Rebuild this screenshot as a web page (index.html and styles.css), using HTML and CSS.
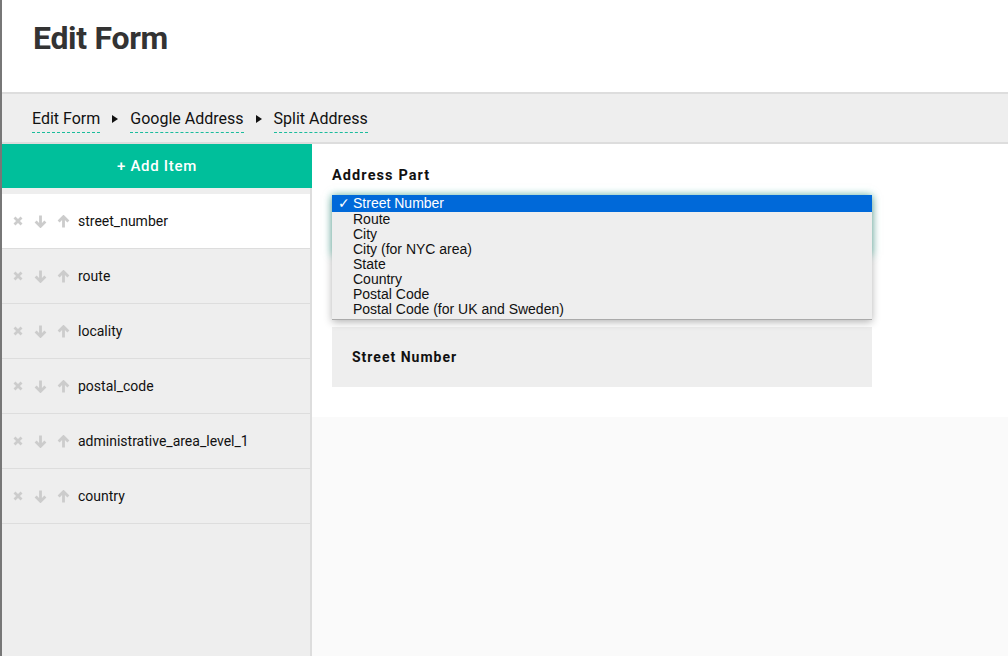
FILE: index.html
```html
<!DOCTYPE html>
<html>
<head>
<meta charset="utf-8">
<link rel="stylesheet" href="styles.css">
</head>
<body>
<div class="app">
  <header class="header">
    <h1 class="title">Edit Form</h1>
  </header>
  <nav class="crumbs">
    <span class="crumb">Edit Form</span>
    <span class="tri"></span>
    <span class="crumb">Google Address</span>
    <span class="tri"></span>
    <span class="crumb">Split Address</span>
  </nav>
  <div class="body">
    <aside class="sidebar">
      <div class="add">+ Add Item</div>
      <ul class="items">
        <li class="item active">
          <svg class="ic x" viewBox="0 0 12 12"><path d="M2.5 2.5L9.5 9.5M9.5 2.5L2.5 9.5"/></svg>
          <svg class="ic" viewBox="0 0 12 12"><path d="M6 0.5V10.5M1.5 6L6 10.5L10.5 6"/></svg>
          <svg class="ic" viewBox="0 0 12 12"><path d="M6 11.5V1.5M1.5 6L6 1.5L10.5 6"/></svg>
          <span class="name">street_number</span></li>
        <li class="item">
          <svg class="ic x" viewBox="0 0 12 12"><path d="M2.5 2.5L9.5 9.5M9.5 2.5L2.5 9.5"/></svg>
          <svg class="ic" viewBox="0 0 12 12"><path d="M6 0.5V10.5M1.5 6L6 10.5L10.5 6"/></svg>
          <svg class="ic" viewBox="0 0 12 12"><path d="M6 11.5V1.5M1.5 6L6 1.5L10.5 6"/></svg>
          <span class="name">route</span></li>
        <li class="item">
          <svg class="ic x" viewBox="0 0 12 12"><path d="M2.5 2.5L9.5 9.5M9.5 2.5L2.5 9.5"/></svg>
          <svg class="ic" viewBox="0 0 12 12"><path d="M6 0.5V10.5M1.5 6L6 10.5L10.5 6"/></svg>
          <svg class="ic" viewBox="0 0 12 12"><path d="M6 11.5V1.5M1.5 6L6 1.5L10.5 6"/></svg>
          <span class="name">locality</span></li>
        <li class="item">
          <svg class="ic x" viewBox="0 0 12 12"><path d="M2.5 2.5L9.5 9.5M9.5 2.5L2.5 9.5"/></svg>
          <svg class="ic" viewBox="0 0 12 12"><path d="M6 0.5V10.5M1.5 6L6 10.5L10.5 6"/></svg>
          <svg class="ic" viewBox="0 0 12 12"><path d="M6 11.5V1.5M1.5 6L6 1.5L10.5 6"/></svg>
          <span class="name">postal_code</span></li>
        <li class="item">
          <svg class="ic x" viewBox="0 0 12 12"><path d="M2.5 2.5L9.5 9.5M9.5 2.5L2.5 9.5"/></svg>
          <svg class="ic" viewBox="0 0 12 12"><path d="M6 0.5V10.5M1.5 6L6 10.5L10.5 6"/></svg>
          <svg class="ic" viewBox="0 0 12 12"><path d="M6 11.5V1.5M1.5 6L6 1.5L10.5 6"/></svg>
          <span class="name">administrative_area_level_1</span></li>
        <li class="item">
          <svg class="ic x" viewBox="0 0 12 12"><path d="M2.5 2.5L9.5 9.5M9.5 2.5L2.5 9.5"/></svg>
          <svg class="ic" viewBox="0 0 12 12"><path d="M6 0.5V10.5M1.5 6L6 10.5L10.5 6"/></svg>
          <svg class="ic" viewBox="0 0 12 12"><path d="M6 11.5V1.5M1.5 6L6 1.5L10.5 6"/></svg>
          <span class="name">country</span></li>
      </ul>
    </aside>
    <main class="main">
      <section class="panel">
        <div class="label">Address Part</div>
        <div class="select-wrap">
          <div class="select"></div>
          <ul class="menu">
            <li class="opt sel"><span class="check">&#x2713;</span>Street Number</li>
            <li class="opt">Route</li>
            <li class="opt">City</li>
            <li class="opt">City (for NYC area)</li>
            <li class="opt">State</li>
            <li class="opt">Country</li>
            <li class="opt">Postal Code</li>
            <li class="opt">Postal Code (for UK and Sweden)</li>
          </ul>
        </div>
        <div class="preview">Street Number</div>
      </section>
    </main>
  </div>
</div>
</body>
</html>
```

FILE: styles.css
```css
* { box-sizing: border-box; }
html, body { margin: 0; padding: 0; height: 100%; }
body { font-family: Roboto, "Noto Sans", sans-serif; color: #222; background: #fafafa; }
.app { height: 656px; display: flex; flex-direction: column; border-left: 2px solid #777; overflow: hidden; }
.header { height: 94px; background: #fff; border-bottom: 2px solid #ddd; padding: 19px 0 0 31px; flex: none; }
.title { margin: 0; font-size: 32px; font-weight: 700; color: #333; letter-spacing: -0.3px; line-height: 38px; }
.crumbs { height: 50px; background: #eee; border-bottom: 2px solid #ddd; display: flex; align-items: flex-start; padding: 15px 0 0 30px; flex: none; }
.crumb { font-size: 16px; line-height: 20px; color: #111; padding-bottom: 3px; border-bottom: 1px dashed #1abc9c; }
.tri { width: 0; height: 0; border-top: 4.5px solid transparent; border-bottom: 4.5px solid transparent; border-left: 6px solid #111; margin: 6px 12px 0 12px; }
.body { flex: 1; display: flex; min-height: 0; }
.sidebar { width: 310px; flex: none; background: #eee; border-right: 2px solid #ddd; }
.add { height: 44px; background: #00bf9b; color: #fff; font-size: 15px; font-weight: 500; letter-spacing: 0.7px; display: flex; align-items: center; justify-content: center; margin-right: -2px; }
.items { list-style: none; margin: 6px 0 0 0; padding: 0; }
.item { height: 55px; border-bottom: 1px solid #ddd; display: flex; align-items: center; padding-left: 10px; font-size: 14px; }
.item.active { background: #fff; }
.ic { width: 13px; height: 13px; margin-right: 10px; fill: none; stroke: #ccc; stroke-width: 2.6; }
.ic.x { width: 12px; height: 12px; margin-right: 10px; stroke-width: 2.8; }
.name { margin-left: -2px; color: #111; }
.main { flex: 1; display: flex; flex-direction: column; background: #fafafa; }
.panel { background: #fff; padding: 24px 20px 30px 20px; }
.label { font-size: 14.5px; font-weight: 700; letter-spacing: 1.1px; color: #111; line-height: 16px; }
.select-wrap { position: relative; width: 540px; margin-top: 11px; }
.select { height: 60px; box-shadow: 0 0 8px rgba(26, 188, 156, 0.55); background: #fff; }
.menu { position: absolute; left: 0; top: 0; width: 540px; list-style: none; margin: 0; padding: 0 0 2px 0; background: #eee; box-shadow: 0 2px 8px rgba(0,0,0,0.3); border-bottom: 1px solid #aaa; font-family: "Liberation Sans", Arial, sans-serif; font-size: 14px; }
.opt { height: 15px; line-height: 15px; padding-left: 21px; color: #111; position: relative; }
.opt.sel { background: #0069d9; color: #fff; height: 17px; line-height: 17px; }
.check { position: absolute; left: 6px; top: 0; font-family: "DejaVu Sans", sans-serif; font-size: 14px; font-weight: 700; }
.preview { margin-top: 72px; width: 540px; height: 60px; background: #eee; font-size: 14px; font-weight: 700; letter-spacing: 1px; color: #111; padding-left: 20px; display: flex; align-items: center; }
```
